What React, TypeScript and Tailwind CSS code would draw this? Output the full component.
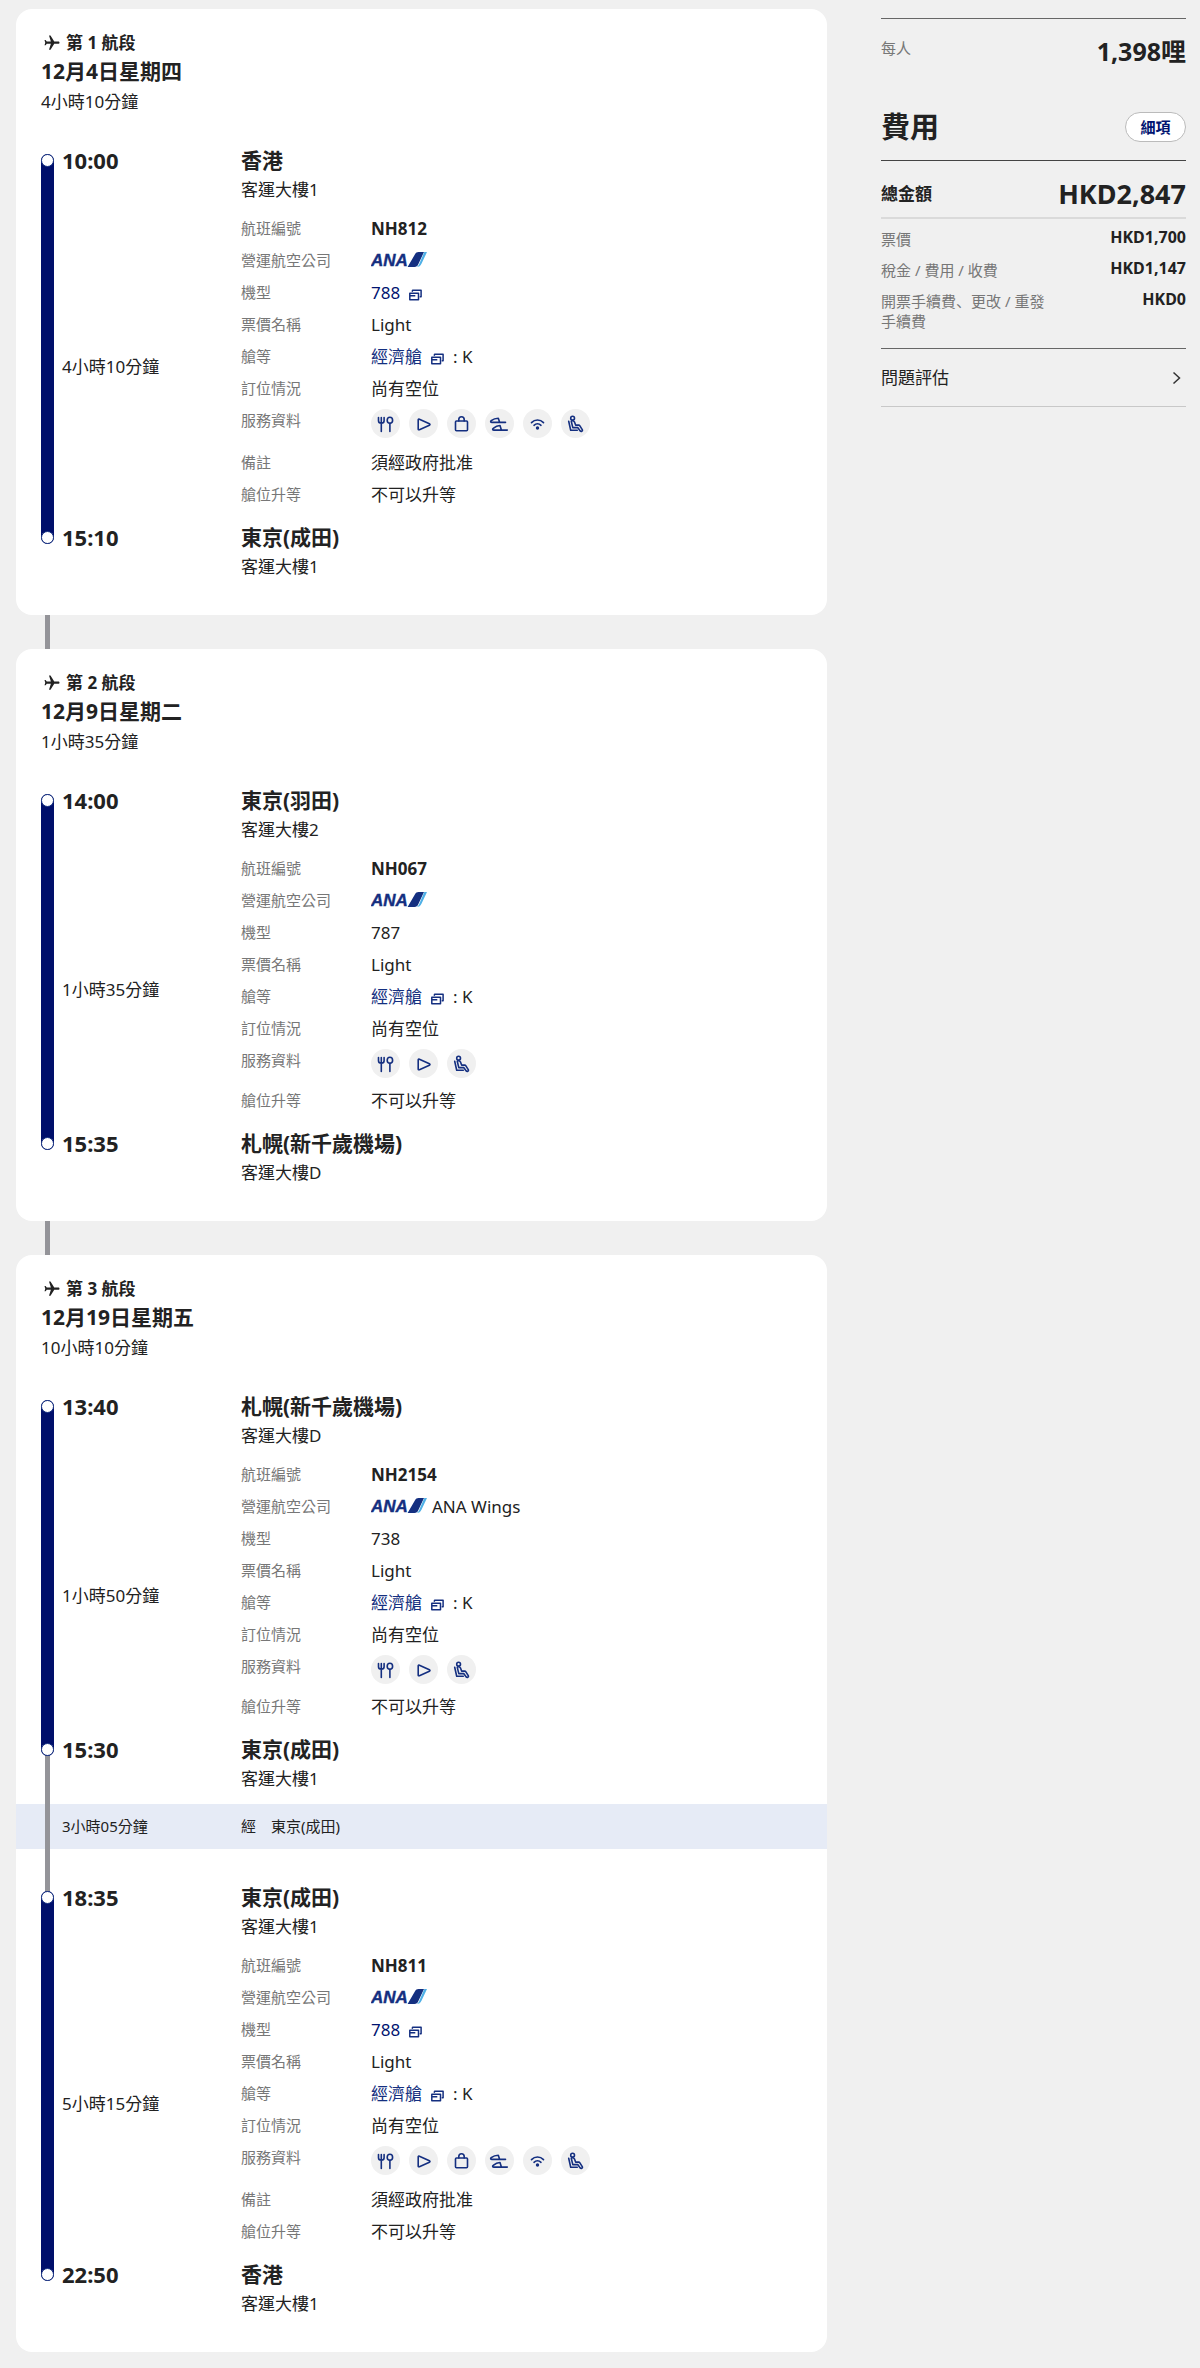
import { FC, ReactNode } from "react";
import { MdFlight } from "react-icons/md";

type Service = "meal" | "video" | "bag" | "slippers" | "wifi" | "seat";

interface Leg {
  depart: string;
  arrive: string;
  duration: string;
  from: string;
  fromTerminal: string;
  to: string;
  toTerminal: string;
  flight: string;
  operator?: string;
  aircraft: string;
  aircraftLink?: boolean;
  services: Service[];
  note?: string;
}

interface Segment {
  no: number;
  date: string;
  total: string;
  legs: Leg[];
  stopover?: { duration: string; place: string };
}

const ALL_SERVICES: Service[] = ["meal", "video", "bag", "slippers", "wifi", "seat"];
const BASIC_SERVICES: Service[] = ["meal", "video", "seat"];

const segments: Segment[] = [
  {
    no: 1,
    date: "12月4日星期四",
    total: "4小時10分鐘",
    legs: [
      {
        depart: "10:00",
        arrive: "15:10",
        duration: "4小時10分鐘",
        from: "香港",
        fromTerminal: "客運大樓1",
        to: "東京(成田)",
        toTerminal: "客運大樓1",
        flight: "NH812",
        aircraft: "788",
        aircraftLink: true,
        services: ALL_SERVICES,
        note: "須經政府批准",
      },
    ],
  },
  {
    no: 2,
    date: "12月9日星期二",
    total: "1小時35分鐘",
    legs: [
      {
        depart: "14:00",
        arrive: "15:35",
        duration: "1小時35分鐘",
        from: "東京(羽田)",
        fromTerminal: "客運大樓2",
        to: "札幌(新千歲機場)",
        toTerminal: "客運大樓D",
        flight: "NH067",
        aircraft: "787",
        services: BASIC_SERVICES,
      },
    ],
  },
  {
    no: 3,
    date: "12月19日星期五",
    total: "10小時10分鐘",
    stopover: { duration: "3小時05分鐘", place: "東京(成田)" },
    legs: [
      {
        depart: "13:40",
        arrive: "15:30",
        duration: "1小時50分鐘",
        from: "札幌(新千歲機場)",
        fromTerminal: "客運大樓D",
        to: "東京(成田)",
        toTerminal: "客運大樓1",
        flight: "NH2154",
        operator: "ANA Wings",
        aircraft: "738",
        services: BASIC_SERVICES,
      },
      {
        depart: "18:35",
        arrive: "22:50",
        duration: "5小時15分鐘",
        from: "東京(成田)",
        fromTerminal: "客運大樓1",
        to: "香港",
        toTerminal: "客運大樓1",
        flight: "NH811",
        aircraft: "788",
        aircraftLink: true,
        services: ALL_SERVICES,
        note: "須經政府批准",
      },
    ],
  },
];

const fees = [
  { label: "票價", value: "HKD1,700" },
  { label: "稅金 / 費用 / 收費", value: "HKD1,147" },
  { label: "開票手續費、更改 / 重發手續費", value: "HKD0" },
];

const serviceIcons: Record<Service, { label: string; art: ReactNode }> = {
  meal: {
    label: "餐飲",
    art: (
      <>
        <path d="M7.5 8.5v3.2c0 1.6 1 2.4 2.8 2.4s2.8-.8 2.8-2.4V8.5M10.3 8.5v14" />
        <ellipse cx="18.9" cy="11.2" rx="2.7" ry="3" />
        <path d="M18.9 14.2v8.3" />
      </>
    ),
  },
  video: {
    label: "影音娛樂",
    art: <path d="M9.2 10.9v9c0 .8.5 1.1 1.2.8l10-4.4c.8-.4.8-1.1 0-1.5l-10-4.6c-.7-.3-1.2 0-1.2.7z" />,
  },
  bag: {
    label: "行李",
    art: (
      <>
        <rect x="8.5" y="12" width="12" height="9.8" rx="1" />
        <path d="M11.8 12v-1.5a2.7 2.7 0 0 1 5.4 0V12" />
      </>
    ),
  },
  slippers: {
    label: "用品",
    art: (
      <>
        <path d="M20.5 13.4H7c-1.4 0-1.8-.9-.8-1.7 2-1.6 4.3-2.5 7.1-2.5l1.3 4" />
        <path d="M22.3 21.1H9c-1.4 0-1.8-.9-.8-1.7 2-1.7 4.2-2.9 6.8-2.9l1.4 4.4" />
      </>
    ),
  },
  wifi: {
    label: "Wi-Fi",
    art: (
      <>
        <path d="M8.5 13.6c3.4-3.4 8.600-3.400 12 0M11 16.300c2-1.900 5-1.900 7 0" />
        <circle cx="14.5" cy="19" r=".9" fill="currentColor" />
      </>
    ),
  },
  seat: {
    label: "座位",
    art: (
      <>
        <circle cx="11.6" cy="9.2" r="1.9" />
        <path d="M7.7 12.3l2 8.9h6.6" />
        <path d="M10.3 12.5l1.5 6.1h4.9l2.5 3.3c.9.9 2.7.2 2.2-1l-2.5-4.1c-.3-.5-.7-.7-1.3-.7h-3l-1.2-3.3c-.8-1.5-3.1-1.4-3.1-.3z" />
      </>
    ),
  },
};

const ServiceIcon: FC<{ name: Service }> = ({ name }) => (
  <li className="size-[29px] rounded-full bg-[#f0f0f0] text-[#142f80]">
    <svg
      viewBox="0 0 29 29"
      className="size-full"
      fill="none"
      stroke="currentColor"
      strokeWidth="1.6"
      strokeLinecap="round"
      strokeLinejoin="round"
      role="img"
      aria-label={serviceIcons[name].label}
    >
      {serviceIcons[name].art}
    </svg>
  </li>
);

const WindowIcon: FC = () => (
  <svg viewBox="0 0 13 12" className="mt-1 h-3 w-[13px]" fill="none" stroke="#142f80" strokeWidth="1.5" strokeLinejoin="round" aria-hidden="true">
    <path d="M3.2 2.8L3.6 1.200h8.500v6.600h-1.400" />
    <path d="M.8 4.200h8.700v6.600H.8zM.8 6.700h5.500" />
  </svg>
);

const AnaLogo: FC = () => (
  <svg viewBox="0 -4 56 24" className="mb-[3px] h-6 w-14" role="img" aria-label="ANA">
    <text
      x="0"
      y="14"
      fontFamily="Liberation Sans, sans-serif"
      fontSize="17"
      fontWeight="700"
      fontStyle="italic"
      fill="#142f80"
      stroke="#142f80"
      strokeWidth=".4"
    >
      ANA
    </text>
    <path d="M36.6 15L44 2.2C44.800.8 46 0 47.500 0H53l-5.600 12c-1 2.200-2 3-4 3z" fill="#142f80" />
    <path d="M53.300 0H56l-5.400 11.500c-1.100 2.400-2.400 3.500-5 3.500 1.300-.5 2-1.500 2.600-2.900z" fill="#4fb0e6" />
  </svg>
);

const Row: FC<{ label: string; className?: string; children: ReactNode }> = ({ label, className = "h-8", children }) => (
  <div className={`flex ${className}`}>
    <dt className="w-[130px] shrink-0 text-[15px] leading-[30px] text-[#777]">{label}</dt>
    <dd className="flex h-8 items-center text-[17px]">{children}</dd>
  </div>
);

const Station: FC<{ name: string; terminal: string }> = ({ name, terminal }) => (
  <div className="leading-[30px]">
    <p className="text-[21px] font-bold">{name}</p>
    <p className="text-[17px]">{terminal}</p>
  </div>
);

const LegBlock: FC<{ leg: Leg }> = ({ leg }) => (
  <div className="flex px-[25px]">
    <div className="relative z-10 mt-[9px] mb-[38px] flex w-[13px] flex-col justify-between rounded-full bg-[#000f6b]">
      <span className="h-[13px] rounded-full border border-[#142f80] bg-white" />
      <span className="h-[13px] rounded-full border border-[#142f80] bg-white" />
    </div>
    <div className="flex w-[187px] shrink-0 flex-col pb-[30px] pl-2">
      <p className="text-[22px] leading-[30px] font-bold">{leg.depart}</p>
      <p className="flex flex-1 items-center pt-9 text-[17px]">{leg.duration}</p>
      <p className="text-[22px] leading-[30px] font-bold">{leg.arrive}</p>
    </div>
    <div className="flex-1">
      <Station name={leg.from} terminal={leg.fromTerminal} />
      <dl className="mt-2 mb-[11px]">
        <Row label="航班編號">
          <b>{leg.flight}</b>
        </Row>
        <Row label="營運航空公司">
          <AnaLogo />
          {leg.operator && <span className="ml-[5px]">{leg.operator}</span>}
        </Row>
        <Row label="機型">
          {leg.aircraftLink ? (
            <a href="#aircraft" className="flex items-center gap-[9px] text-[#001370]">
              {leg.aircraft}
              <WindowIcon />
            </a>
          ) : (
            leg.aircraft
          )}
        </Row>
        <Row label="票價名稱">Light</Row>
        <Row label="艙等">
          <a href="#cabin" className="mr-[9px] flex items-center gap-[9px] text-[#142f80]">
            經濟艙
            <WindowIcon />
          </a>
          : K
        </Row>
        <Row label="訂位情況">尚有空位</Row>
        <Row label="服務資料" className="h-10">
          <ul className="flex gap-[9px] pt-1">
            {leg.services.map((s) => (
              <ServiceIcon key={s} name={s} />
            ))}
          </ul>
        </Row>
        {leg.note && (
          <Row label="備註" className="pt-0.5">
            {leg.note}
          </Row>
        )}
        <Row label="艙位升等">不可以升等</Row>
      </dl>
      <Station name={leg.to} terminal={leg.toTerminal} />
    </div>
  </div>
);

const Stopover: FC<{ duration: string; place: string }> = ({ duration, place }) => (
  <div className="relative mt-[10px] mb-[33px] flex h-[45px] items-center bg-[#e6ebf6] pl-[46px] text-[15px]">
    <span className="absolute -top-[50px] -bottom-[45px] left-[29px] w-[5px] bg-[#949499]" />
    <p className="w-[179px]">{duration}</p>
    <p className="flex gap-[15px]">
      <span>經</span>
      <span>{place}</span>
    </p>
  </div>
);

const SegmentCard: FC<{ segment: Segment }> = ({ segment }) => (
  <section className="rounded-2xl bg-white pt-5 pb-[33px]">
    <header className="mb-[27px] px-[25px]">
      <p className="flex h-[27px] items-center gap-[5px] pl-0.5 text-[17px] font-bold">
        <MdFlight className="size-[18px] rotate-90" aria-hidden="true" />第 {segment.no} 航段
      </p>
      <h2 className="text-[21px] leading-[30px] font-bold">{segment.date}</h2>
      <p className="text-[17px] leading-8">{segment.total}</p>
    </header>
    {segment.legs.map((leg, i) => (
      <div key={leg.flight}>
        {i > 0 && segment.stopover && <Stopover {...segment.stopover} />}
        <LegBlock leg={leg} />
      </div>
    ))}
  </section>
);

const PriceSummary: FC = () => (
  <aside className="w-[305px] shrink-0 pt-[9px]">
    <div className="flex justify-between border-t border-[#666] pt-[15px]">
      <span className="text-[15px] leading-7 text-[#777]">每人</span>
      <strong className="text-[25px] leading-[34px]">1,398哩</strong>
    </div>
    <div className="mt-[38px] flex items-center justify-between border-b border-[#444] pb-3">
      <h2 className="text-[29px] leading-[42px] font-bold">費用</h2>
      <button type="button" className="h-[30px] w-[61px] rounded-full border border-[#bbb] bg-white text-[15px] font-bold text-[#001370]">
        細項
      </button>
    </div>
    <div className="flex items-center justify-between border-b-2 border-[#dadada] pt-[14px] pb-1">
      <span className="text-[17px] font-bold">總金額</span>
      <strong className="text-[27px] leading-[38px]">HKD2,847</strong>
    </div>
    <dl className="flex flex-col gap-[11px] border-b border-[#666] pt-[10px] pb-[17px]">
      {fees.map((fee) => (
        <div key={fee.label} className="flex justify-between">
          <dt className="w-[170px] font-['Noto_Sans','Noto_Sans_CJK_JP',sans-serif] text-[15px] leading-5 text-[#777]">{fee.label}</dt>
          <dd className="text-[16px] leading-4 font-bold">{fee.value}</dd>
        </div>
      ))}
    </dl>
    <button type="button" className="flex h-[58px] w-full items-center justify-between border-b border-[#c8c8c8] pr-[5px] text-[17px]">
      問題評估
      <svg viewBox="0 0 9 14" className="h-[14px] w-[9px]" fill="none" stroke="#333" strokeWidth="1.5" aria-hidden="true">
        <path d="M1.5 1.500L7.500 7l-6 5.500" />
      </svg>
    </button>
  </aside>
);

const App: FC = () => {
  return (
    <div className="flex min-h-screen items-start gap-[54px] bg-[#f0f0f0] pt-[9px] pr-[14px] pb-4 pl-4 font-['Noto_Sans','Noto_Sans_CJK_TC',sans-serif] text-[#222]">
      <main className="min-w-0 flex-1">
        {segments.map((segment, i) => (
          <div key={segment.no}>
            {i > 0 && <div className="ml-[29px] h-[34px] w-[5px] bg-[#949499]" />}
            <SegmentCard segment={segment} />
          </div>
        ))}
      </main>
      <PriceSummary />
    </div>
  );
};

export default App;
